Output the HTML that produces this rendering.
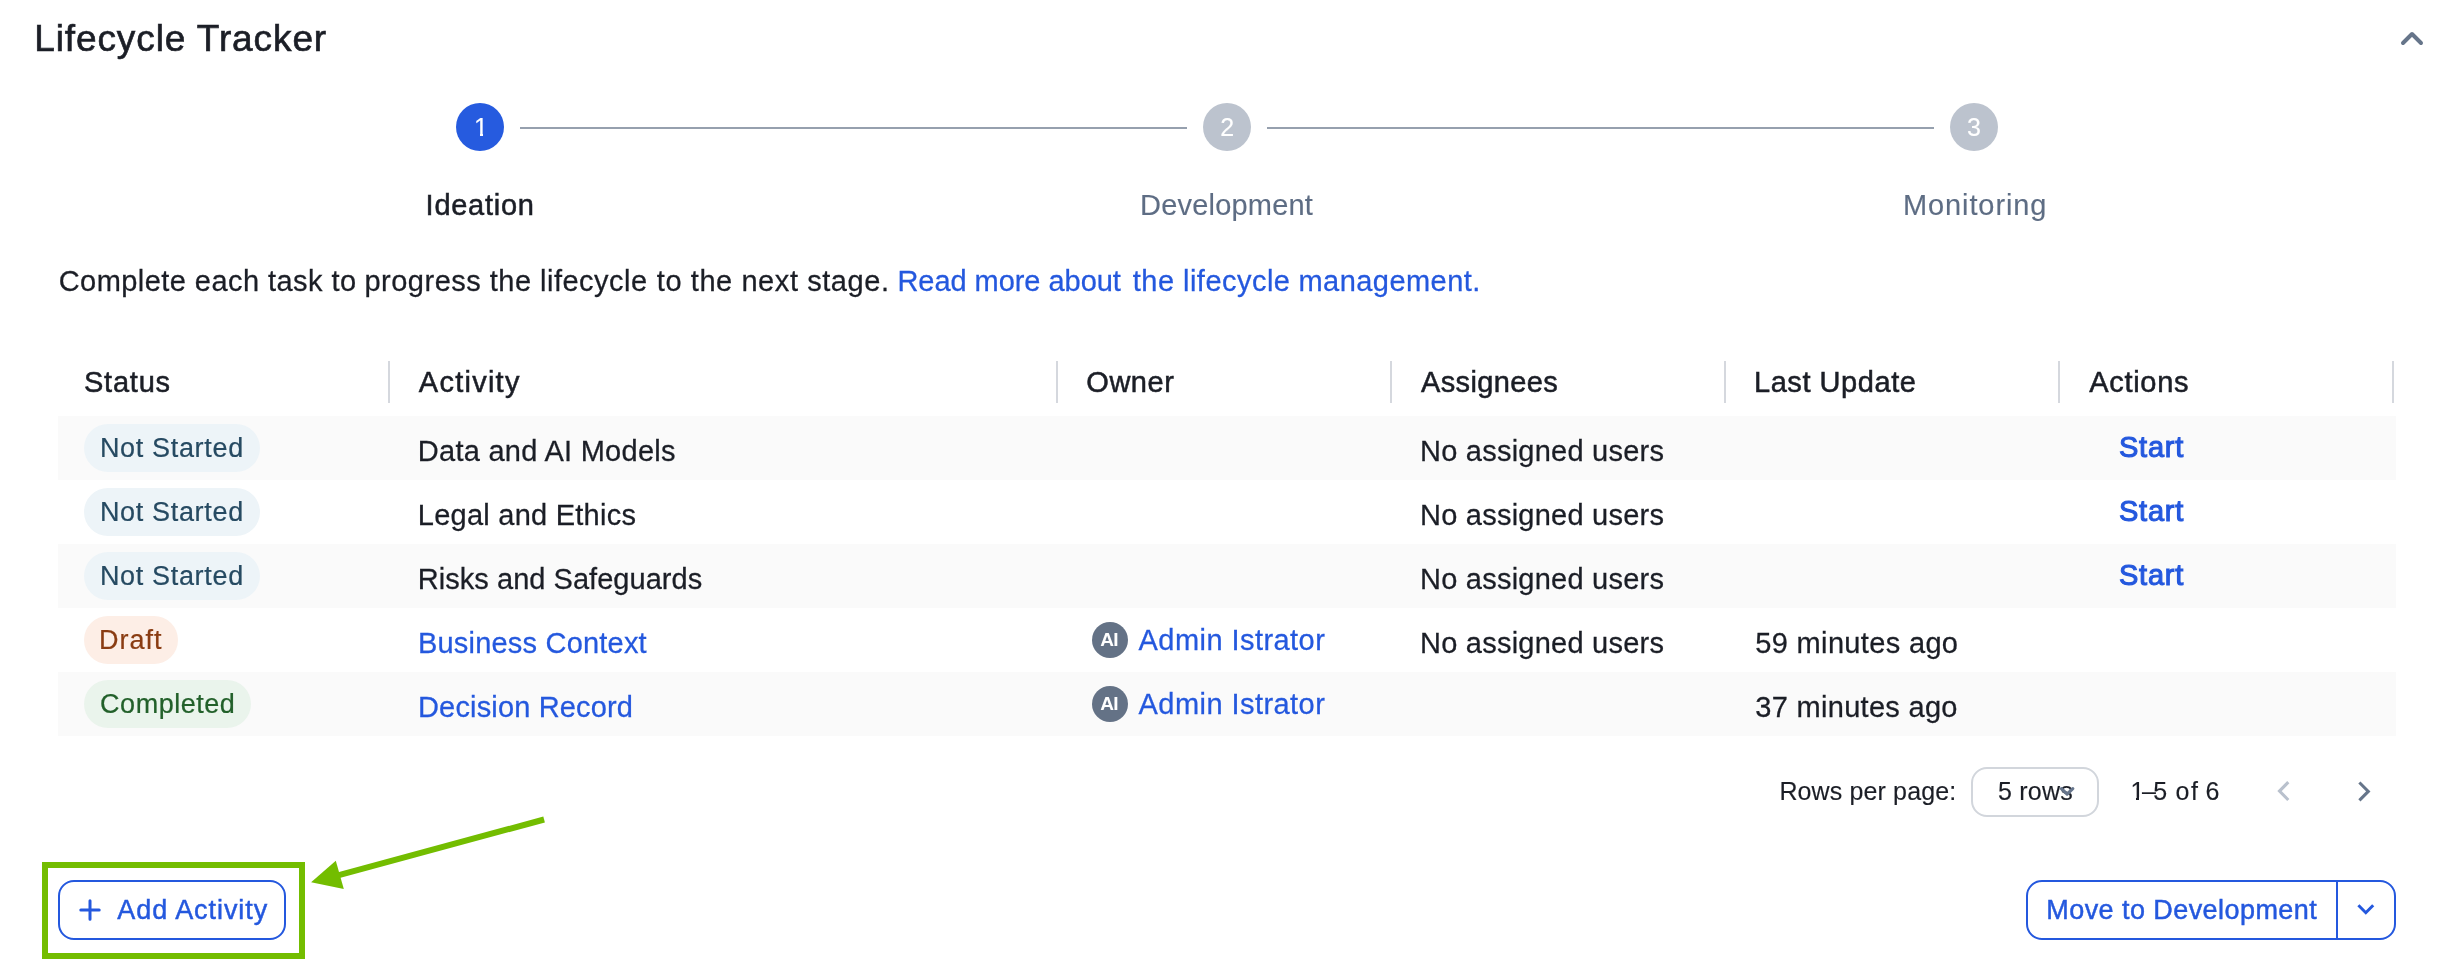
<!DOCTYPE html>
<html lang="en"><head><meta charset="utf-8"><title>Lifecycle Tracker</title>
<style>
html,body{margin:0;padding:0;background:#fff;}
body{width:2456px;height:970px;position:relative;overflow:hidden;font-family:"Liberation Sans", Arial, sans-serif;}
.t{position:absolute;white-space:nowrap;margin:0;padding:0;font-kerning:normal;}
#L{position:absolute;left:0;top:0;width:2456px;height:970px;will-change:transform;}
.row{position:absolute;left:58px;width:2338px;height:64px;background:#fafafa;}
.sep{position:absolute;top:361px;width:2px;height:42px;background:#d5d8de;}
.chip{position:absolute;left:84px;height:48px;border-radius:24px;}
.circ{position:absolute;top:103px;width:48px;height:48px;border-radius:50%;}
.line{position:absolute;top:127px;height:2px;background:#96a0ae;}
.av{position:absolute;left:1092px;width:36px;height:36px;border-radius:50%;background:#647286;}
.btn{position:absolute;box-sizing:border-box;border:2px solid #2458de;border-radius:16px;background:#fff;}
svg{position:absolute;overflow:visible;}
.foot{position:absolute;z-index:6;}
</style></head>
<body>
<div class="circ" style="left:456px;background:#265bdf"></div>
<div class="circ" style="left:1203px;background:#bcc3ce"></div>
<div class="circ" style="left:1950px;background:#bcc3ce"></div>
<div class="line" style="left:520px;width:667px"></div>
<div class="line" style="left:1267px;width:667px"></div>
<svg style="left:2396px;top:24px" width="32" height="28" viewBox="2396 24 32 28"><path d="M2403 43 L2412 34 L2421 43" fill="none" stroke="#66758a" stroke-width="4" stroke-linecap="round" stroke-linejoin="round"/></svg>
<div class="row" style="top:416px"></div>
<div class="row" style="top:544px"></div>
<div class="row" style="top:672px"></div>
<div class="sep" style="left:388px"></div>
<div class="sep" style="left:1056px"></div>
<div class="sep" style="left:1390px"></div>
<div class="sep" style="left:1724px"></div>
<div class="sep" style="left:2058px"></div>
<div class="sep" style="left:2392px"></div>
<div class="chip" style="top:424px;width:176px;background:#edf4f8"></div>
<div class="chip" style="top:488px;width:176px;background:#edf4f8"></div>
<div class="chip" style="top:552px;width:176px;background:#edf4f8"></div>
<div class="chip" style="top:616px;width:94px;background:#fdeee6"></div>
<div class="chip" style="top:680px;width:167px;background:#eaf4ec"></div>
<div class="av" style="top:622px"></div>
<div class="av" style="top:686px"></div>
<div class="btn" style="left:1971px;top:767px;width:128px;height:50px;border-color:#d2d6dc;border-radius:16px"></div>
<svg style="left:2270px;top:776px" width="30" height="30" viewBox="2270 776 30 30"><path d="M2288.3 782.2 L2279.5 791.1 L2288.3 800" fill="none" stroke="#b9c1cd" stroke-width="3.1"/></svg>
<svg style="left:2350px;top:776px" width="30" height="30" viewBox="2350 776 30 30"><path d="M2359.4 782.5 L2368.3 791.4 L2359.4 800.3" fill="none" stroke="#66758a" stroke-width="3.1"/></svg>
<div style="position:absolute;left:42px;top:862px;width:263px;height:97px;box-sizing:border-box;border:6px solid #73bd00"></div>
<div class="btn" style="left:58px;top:880px;width:228px;height:60px"></div>
<svg style="left:78px;top:898px" width="24" height="24" viewBox="0 0 24 24"><path d="M12 2.8 V21.2 M2.8 12 H21.2" fill="none" stroke="#2458de" stroke-width="3" stroke-linecap="round"/></svg>
<svg style="left:300px;top:810px" width="260" height="90" viewBox="300 810 260 90"><path d="M544.1 819.5 L338 875.3" fill="none" stroke="#73bd00" stroke-width="6"/><path d="M311.1 882.3 L335.8 860.7 L343.8 888.9 Z" fill="#73bd00"/></svg>
<div class="btn" style="left:2026px;top:880px;width:370px;height:60px"></div>
<div style="position:absolute;left:2336px;top:880px;width:2px;height:60px;background:#2458de"></div>
<svg style="left:2350px;top:895px" width="32" height="30" viewBox="2350 895 32 30"><path d="M2358.4 905.2 L2365.8 912.7 L2373.2 905.2" fill="none" stroke="#2458de" stroke-width="3"/></svg>

<div id="L">
<span class="t" style="left:34.20px;top:20.00px;font-size:37.0px;line-height:37.0px;color:#1b1e26;letter-spacing:0.900px;-webkit-text-stroke:0.67px #1b1e26;">Lifecycle Tracker</span>
<span class="t" style="left:474.10px;top:115.00px;font-size:25.0px;line-height:25.0px;color:#fff;-webkit-text-stroke:0.15px #fff;">1</span>
<span class="t" style="left:1220.30px;top:115.00px;font-size:25.0px;line-height:25.0px;color:#fff;-webkit-text-stroke:0.15px #fff;">2</span>
<span class="t" style="left:1967.00px;top:115.00px;font-size:25.0px;line-height:25.0px;color:#fff;-webkit-text-stroke:0.15px #fff;">3</span>
<span class="t" style="left:425.60px;top:191.00px;font-size:29.0px;line-height:29.0px;color:#1b1e26;letter-spacing:0.729px;-webkit-text-stroke:0.52px #1b1e26;">Ideation</span>
<span class="t" style="left:1140.00px;top:191.00px;font-size:29.0px;line-height:29.0px;color:#5e6d84;letter-spacing:0.200px;-webkit-text-stroke:0.12000000000000002px #5e6d84;">Development</span>
<span class="t" style="left:1903.00px;top:191.00px;font-size:29.0px;line-height:29.0px;color:#5e6d84;letter-spacing:0.889px;-webkit-text-stroke:0.12000000000000002px #5e6d84;">Monitoring</span>
<span class="t" style="left:58.70px;top:267.00px;font-size:29.0px;line-height:29.0px;color:#1b1e26;letter-spacing:0.445px;-webkit-text-stroke:0.27px #1b1e26;">Complete each task to </span>
<span class="t" style="left:364.50px;top:267.00px;font-size:29.0px;line-height:29.0px;color:#1b1e26;letter-spacing:0.486px;-webkit-text-stroke:0.27px #1b1e26;">progress the lifecycle </span>
<span class="t" style="left:656.80px;top:267.00px;font-size:29.0px;line-height:29.0px;color:#1b1e26;letter-spacing:0.571px;-webkit-text-stroke:0.27px #1b1e26;">to the next stage. </span>
<span class="t" style="left:897.40px;top:267.00px;font-size:29.0px;line-height:29.0px;color:#2458de;letter-spacing:-0.043px;-webkit-text-stroke:0.27px #2458de;">Read more about </span>
<span class="t" style="left:1132.80px;top:267.00px;font-size:29.0px;line-height:29.0px;color:#2458de;letter-spacing:0.467px;-webkit-text-stroke:0.27px #2458de;">the lifecycle </span>
<span class="t" style="left:1298.50px;top:267.00px;font-size:29.0px;line-height:29.0px;color:#2458de;letter-spacing:0.450px;-webkit-text-stroke:0.27px #2458de;">management.</span>
<span class="t" style="left:84.00px;top:368.00px;font-size:29.0px;line-height:29.0px;color:#1b1e26;letter-spacing:0.780px;-webkit-text-stroke:0.52px #1b1e26;">Status</span>
<span class="t" style="left:418.80px;top:368.00px;font-size:29.0px;line-height:29.0px;color:#1b1e26;letter-spacing:1.257px;-webkit-text-stroke:0.52px #1b1e26;">Activity</span>
<span class="t" style="left:1086.30px;top:368.00px;font-size:29.0px;line-height:29.0px;color:#1b1e26;letter-spacing:0.525px;-webkit-text-stroke:0.52px #1b1e26;">Owner</span>
<span class="t" style="left:1421.00px;top:368.00px;font-size:29.0px;line-height:29.0px;color:#1b1e26;letter-spacing:0.362px;-webkit-text-stroke:0.52px #1b1e26;">Assignees</span>
<span class="t" style="left:1754.00px;top:368.00px;font-size:29.0px;line-height:29.0px;color:#1b1e26;letter-spacing:0.550px;-webkit-text-stroke:0.52px #1b1e26;">Last Update</span>
<span class="t" style="left:2089.30px;top:368.00px;font-size:29.0px;line-height:29.0px;color:#1b1e26;letter-spacing:0.683px;-webkit-text-stroke:0.52px #1b1e26;">Actions</span>
<span class="t" style="left:99.90px;top:435.00px;font-size:27.0px;line-height:27.0px;color:#264a62;letter-spacing:0.670px;-webkit-text-stroke:0.22px #264a62;">Not Started</span>
<span class="t" style="left:99.90px;top:499.00px;font-size:27.0px;line-height:27.0px;color:#264a62;letter-spacing:0.670px;-webkit-text-stroke:0.22px #264a62;">Not Started</span>
<span class="t" style="left:99.90px;top:563.00px;font-size:27.0px;line-height:27.0px;color:#264a62;letter-spacing:0.670px;-webkit-text-stroke:0.22px #264a62;">Not Started</span>
<span class="t" style="left:99.10px;top:627.00px;font-size:27.0px;line-height:27.0px;color:#8a3c12;letter-spacing:0.975px;-webkit-text-stroke:0.22px #8a3c12;">Draft</span>
<span class="t" style="left:100.10px;top:691.00px;font-size:27.0px;line-height:27.0px;color:#22602a;letter-spacing:0.513px;-webkit-text-stroke:0.22px #22602a;">Completed</span>
<span class="t" style="left:417.80px;top:437.00px;font-size:29.0px;line-height:29.0px;color:#1b1e26;letter-spacing:0.271px;-webkit-text-stroke:0.27px #1b1e26;">Data and AI Models</span>
<span class="t" style="left:417.80px;top:501.00px;font-size:29.0px;line-height:29.0px;color:#1b1e26;letter-spacing:0.247px;-webkit-text-stroke:0.27px #1b1e26;">Legal and Ethics</span>
<span class="t" style="left:417.80px;top:565.00px;font-size:29.0px;line-height:29.0px;color:#1b1e26;letter-spacing:0.037px;-webkit-text-stroke:0.27px #1b1e26;">Risks and Safeguards</span>
<span class="t" style="left:418.00px;top:629.00px;font-size:29.0px;line-height:29.0px;color:#2458de;letter-spacing:0.200px;-webkit-text-stroke:0.27px #2458de;">Business Context</span>
<span class="t" style="left:418.00px;top:693.00px;font-size:29.0px;line-height:29.0px;color:#2458de;letter-spacing:0.157px;-webkit-text-stroke:0.27px #2458de;">Decision Record</span>
<span class="t" style="left:1138.60px;top:626.00px;font-size:29.0px;line-height:29.0px;color:#2458de;letter-spacing:0.438px;-webkit-text-stroke:0.27px #2458de;">Admin Istrator</span>
<span class="t" style="left:1100.30px;top:630.00px;font-size:19.0px;line-height:19.0px;color:#fff;letter-spacing:-0.800px;font-weight:700;">AI</span>
<span class="t" style="left:1138.60px;top:690.00px;font-size:29.0px;line-height:29.0px;color:#2458de;letter-spacing:0.438px;-webkit-text-stroke:0.27px #2458de;">Admin Istrator</span>
<span class="t" style="left:1100.30px;top:694.00px;font-size:19.0px;line-height:19.0px;color:#fff;letter-spacing:-0.800px;font-weight:700;">AI</span>
<span class="t" style="left:1420.00px;top:437.00px;font-size:29.0px;line-height:29.0px;color:#1b1e26;letter-spacing:0.237px;-webkit-text-stroke:0.27px #1b1e26;">No assigned users</span>
<span class="t" style="left:1420.00px;top:501.00px;font-size:29.0px;line-height:29.0px;color:#1b1e26;letter-spacing:0.237px;-webkit-text-stroke:0.27px #1b1e26;">No assigned users</span>
<span class="t" style="left:1420.00px;top:565.00px;font-size:29.0px;line-height:29.0px;color:#1b1e26;letter-spacing:0.237px;-webkit-text-stroke:0.27px #1b1e26;">No assigned users</span>
<span class="t" style="left:1420.00px;top:629.00px;font-size:29.0px;line-height:29.0px;color:#1b1e26;letter-spacing:0.237px;-webkit-text-stroke:0.27px #1b1e26;">No assigned users</span>
<span class="t" style="left:1755.30px;top:629.00px;font-size:29.0px;line-height:29.0px;color:#1b1e26;letter-spacing:0.338px;-webkit-text-stroke:0.27px #1b1e26;">59 minutes ago</span>
<span class="t" style="left:1755.30px;top:693.00px;font-size:29.0px;line-height:29.0px;color:#1b1e26;letter-spacing:0.300px;-webkit-text-stroke:0.27px #1b1e26;">37 minutes ago</span>
<span class="t" style="left:2119.00px;top:433.00px;font-size:29.0px;line-height:29.0px;color:#2458de;letter-spacing:0.750px;-webkit-text-stroke:1.07px #2458de;">Start</span>
<span class="t" style="left:2119.00px;top:497.00px;font-size:29.0px;line-height:29.0px;color:#2458de;letter-spacing:0.750px;-webkit-text-stroke:1.07px #2458de;">Start</span>
<span class="t" style="left:2119.00px;top:561.00px;font-size:29.0px;line-height:29.0px;color:#2458de;letter-spacing:0.750px;-webkit-text-stroke:1.07px #2458de;">Start</span>
<span class="t" style="left:1779.40px;top:779.00px;font-size:25.0px;line-height:25.0px;color:#1b1e26;letter-spacing:0.131px;-webkit-text-stroke:0.15px #1b1e26;">Rows per page:</span>
<span class="t" style="left:1997.90px;top:779.00px;font-size:25.0px;line-height:25.0px;color:#1b1e26;letter-spacing:0.260px;-webkit-text-stroke:0.15px #1b1e26;">5 rows</span>
<span class="t" style="left:2130.60px;top:779.00px;font-size:25.0px;line-height:25.0px;color:#1b1e26;letter-spacing:-2.550px;-webkit-text-stroke:0.15px #1b1e26;">1–5 </span>
<span class="t" style="left:2175.40px;top:779.00px;font-size:25.0px;line-height:25.0px;color:#1b1e26;letter-spacing:1.800px;-webkit-text-stroke:0.15px #1b1e26;">of </span>
<span class="t" style="left:2205.50px;top:779.00px;font-size:25.0px;line-height:25.0px;color:#1b1e26;-webkit-text-stroke:0.15px #1b1e26;">6</span>
<span class="t" style="left:117.30px;top:897.00px;font-size:27.0px;line-height:27.0px;color:#2458de;letter-spacing:0.945px;-webkit-text-stroke:0.47px #2458de;">Add Activity</span>
<span class="t" style="left:2046.30px;top:897.00px;font-size:27.0px;line-height:27.0px;color:#2458de;letter-spacing:0.433px;-webkit-text-stroke:0.47px #2458de;">Move to Development</span>
</div>
<svg style="left:2056px;top:780px;z-index:5" width="22" height="22" viewBox="2056 780 22 22"><path d="M2061.4 788.6 L2067.1 794.1 L2072.8 788.6" fill="none" stroke="#66758c" stroke-width="3.2" stroke-linecap="round" stroke-linejoin="round"/></svg>
<div class="foot" style="left:473px;top:133.4px;width:7.3px;height:3.4px;background:#265bdf"></div>
<div class="foot" style="left:482.9px;top:133.4px;width:5.6px;height:3.4px;background:#265bdf"></div>
<div class="foot" style="left:2130px;top:797.4px;width:6.35px;height:3.4px;background:#fff"></div>
<div class="foot" style="left:2139.08px;top:797.4px;width:5px;height:3.4px;background:#fff"></div>
</body></html>
